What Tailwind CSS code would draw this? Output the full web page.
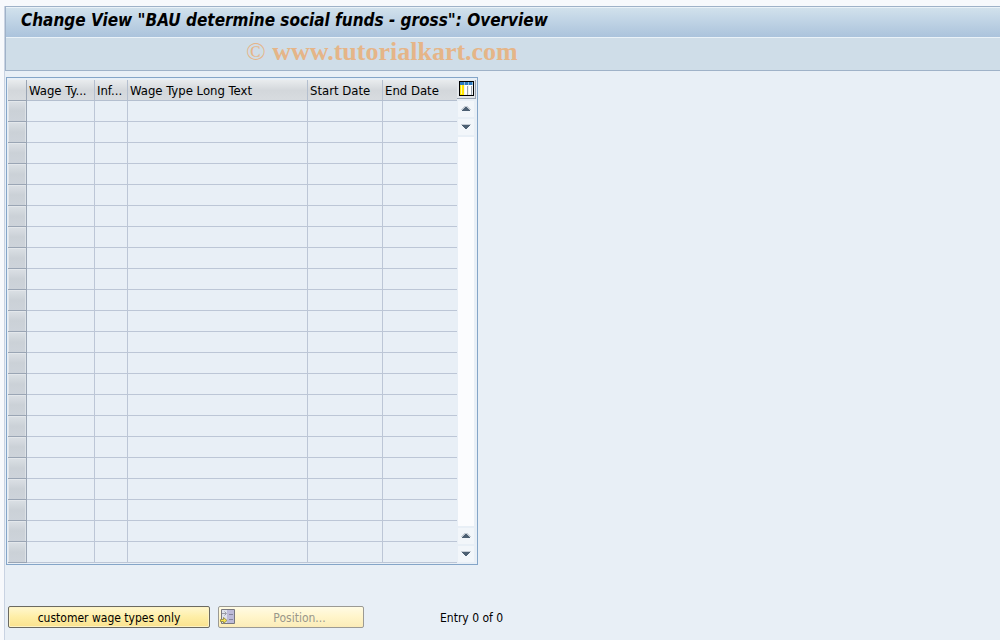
<!DOCTYPE html>
<html lang="en">
<head>
<meta charset="utf-8">
<title>Change View "BAU determine social funds - gross": Overview</title>
<script src="https://cdn.jsdelivr.net/npm/@tailwindcss/browser@4"></script>
</head>
<body class="bg-[#f7f9fc] font-['DejaVu_Sans_Condensed','DejaVu_Sans',sans-serif] [font-stretch:condensed] text-[12px] leading-4 text-black overflow-hidden">
<div class="flex flex-col min-h-screen pt-[6px] pl-1">
  <main class="flex flex-col grow bg-[#e8eff6] border-l border-[#c9d3e2]">
    <header class="border-y border-l border-[#9fb2c8]">
      <div class="h-[30px] flex items-center border-t border-[#eaf2f8] bg-linear-to-b from-[#d1e1ec] to-[#abc3dc] pl-[15px]">
        <h1 class="text-[17px] leading-5 font-bold italic whitespace-nowrap pb-[6px]">Change View "BAU determine social funds - gross": Overview</h1>
      </div>
      <div class="h-[33px] border-t border-[#eaf2f8] bg-[#cfdde8] pl-[240px] flex items-center">
        <p class="font-['Liberation_Serif',serif] font-bold text-[26px] leading-7 text-[#e5b588] whitespace-nowrap pb-1"><span class="font-normal">©</span> www.tutorialkart.com</p>
      </div>
    </header>

    <section class="mt-[6px] ml-px w-[472px] flex border border-[#84a5c8] pt-[2px] pl-px pb-px">
      <table class="w-[449px] shrink-0 table-fixed border-separate border-spacing-0">
        <colgroup><col class="w-[19px]"><col class="w-[68px]"><col class="w-[33px]"><col class="w-[180px]"><col class="w-[75px]"><col class="w-[74px]"></colgroup>
        <thead>
          <tr class="h-[21px] text-left text-[13px] bg-linear-to-b from-[#e9ecee] via-[#d3d7db] to-[#d8dce0]">
            <td class="border-r border-b border-[#9aa5b4]"></td>
            <th scope="col" class="font-normal border-r border-b border-[#b4bfcf] p-0 pt-[2px] pl-[2px] whitespace-nowrap">Wage Ty...</th>
            <th scope="col" class="font-normal border-r border-b border-[#b4bfcf] p-0 pt-[2px] pl-[2px] whitespace-nowrap">Inf...</th>
            <th scope="col" class="font-normal border-r border-b border-[#b4bfcf] p-0 pt-[2px] pl-[2px] whitespace-nowrap">Wage Type Long Text</th>
            <th scope="col" class="font-normal border-r border-b border-[#b4bfcf] p-0 pt-[2px] pl-[2px] whitespace-nowrap">Start Date</th>
            <th scope="col" class="font-normal border-b border-[#b4bfcf] p-0 pt-[2px] pl-[2px] whitespace-nowrap">End Date</th>
          </tr>
        </thead>
        <tbody id="rows"></tbody>
      </table>
      <div class="flex flex-col">
        <button type="button" aria-label="Table settings" class="size-[19px] flex items-start justify-center bg-[#e2e6ea] pt-px border-r border-b border-[#9aa5b4]">
          <svg width="15" height="15" viewBox="0 0 15 15" shape-rendering="crispEdges"><path fill="#000" d="M0 0h15v15H0z"/><path fill="#eef1f4" d="M1 1h13v13H1z"/><path fill="#2b78bd" d="M1 1h13v3H1z"/><path fill="#8cbce2" d="M5 1h1v3H5zM9 1h1v3H9zM13 1h1v3h-1z"/><path fill="#ffe600" d="M1 4h4v10H1z"/><path fill="#fff7a0" d="M2 4h1v9H2z"/><path fill="#fff" d="M6 4h3v9H6zM10 4h3v9h-3z"/><path fill="#9aa5b0" d="M8 5h1v9H8zM12 5h1v9h-1z"/></svg>
        </button>
        <div class="flex flex-col grow w-4 ml-px pt-[2px] pb-px gap-[2px]">
          <button type="button" aria-label="Scroll up" class="h-4 w-4 flex items-center justify-center bg-[#f2f6fa]"><svg width="10" height="6" viewBox="0 0 10 6" shape-rendering="crispEdges"><path fill="#c5ccd4" d="M3 0h4v1h1v1h1v1h1v1H0V3h1V2h1V1h1z"/><path fill="#4d6073" d="M4 1h2v1h1v1h1v1h1v1H1V4h1V3h1V2h1z"/></svg></button>
          <button type="button" aria-label="Scroll down" class="h-4 w-4 flex items-center justify-center bg-[#f2f6fa]"><svg width="10" height="6" viewBox="0 0 10 6" shape-rendering="crispEdges"><path fill="#c5ccd4" d="M0 0h10v1H0z"/><path fill="#4d6073" d="M1 1h8v1H8v1H7v1H6v1H4V4H3V3H2V2H1z"/></svg></button>
          <div class="grow w-4 bg-[#fbfcfe]"></div>
          <button type="button" aria-label="Page up" class="h-4 w-4 flex items-center justify-center bg-[#f2f6fa]"><svg width="10" height="6" viewBox="0 0 10 6" shape-rendering="crispEdges"><path fill="#c5ccd4" d="M3 0h4v1h1v1h1v1h1v1H0V3h1V2h1V1h1z"/><path fill="#4d6073" d="M4 1h2v1h1v1h1v1h1v1H1V4h1V3h1V2h1z"/></svg></button>
          <button type="button" aria-label="Page down" class="h-4 w-4 flex items-center justify-center bg-[#f2f6fa]"><svg width="10" height="6" viewBox="0 0 10 6" shape-rendering="crispEdges"><path fill="#c5ccd4" d="M0 0h10v1H0z"/><path fill="#4d6073" d="M1 1h8v1H8v1H7v1H6v1H4V4H3V3H2V2H1z"/></svg></button>
        </div>
      </div>
    </section>

    <footer class="mt-[41px] ml-[3px] flex items-center gap-2">
      <button type="button" class="w-[202px] h-[22px] pt-px rounded-[2px] border border-[#6b6a62] bg-linear-to-b from-[#fff7cf] via-[#feeea6] to-[#fae28e] shadow-[inset_0_0_0_1px_#fdf3c4]">customer wage types only</button>
      <button type="button" disabled class="w-[146px] h-[22px] flex items-center rounded-[2px] border border-[#9b9a94] bg-linear-to-b from-[#fffbe4] via-[#fff5ca] to-[#fbecb8] text-[#99978b] pl-px">
        <svg width="16" height="16" viewBox="0 0 16 16"><path fill="#dfe3ec" stroke="#77777f" d="M1.500 .5h13v14h-13z"/><path fill="#bcbad8" d="M7 1h7v13H7z"/><path stroke="#85859c" d="M9 5.500h4M9 10.500h4"/><path fill="none" stroke="#9a9ca6" d="M2 4.500h4M4.500 2.500l2 2-2 2"/><path fill="#f7e44e" stroke="#9b9150" d="M.5 10.500h3v-2l3.500 3-3.500 3v-2h-3z"/></svg>
        <span class="grow text-center pt-px">Position...</span>
      </button>
      <p class="ml-[68px] pt-px">Entry 0 of 0</p>
    </footer>
  </main>
</div>
<template id="row">
  <tr class="h-[21px]">
    <td class="p-0 border-r border-b border-[#9aa5b4] bg-linear-to-b from-[#dbe0e5] via-[#cbd1d7] to-[#cdd3da] shadow-[inset_1px_1px_0_#e3e7eb,inset_-1px_0_0_#dde2e7]"></td>
    <td class="p-0 border-r border-b border-[#bcc6d6]"></td>
    <td class="p-0 border-r border-b border-[#bcc6d6]"></td>
    <td class="p-0 border-r border-b border-[#bcc6d6]"></td>
    <td class="p-0 border-r border-b border-[#bcc6d6]"></td>
    <td class="p-0 border-b border-[#bcc6d6]"></td>
  </tr>
</template>
<script>
  const row = document.getElementById('row').content;
  const rows = document.getElementById('rows');
  for (let i = 0; i < 22; i++) rows.append(row.cloneNode(true));
</script>
</body>
</html>
